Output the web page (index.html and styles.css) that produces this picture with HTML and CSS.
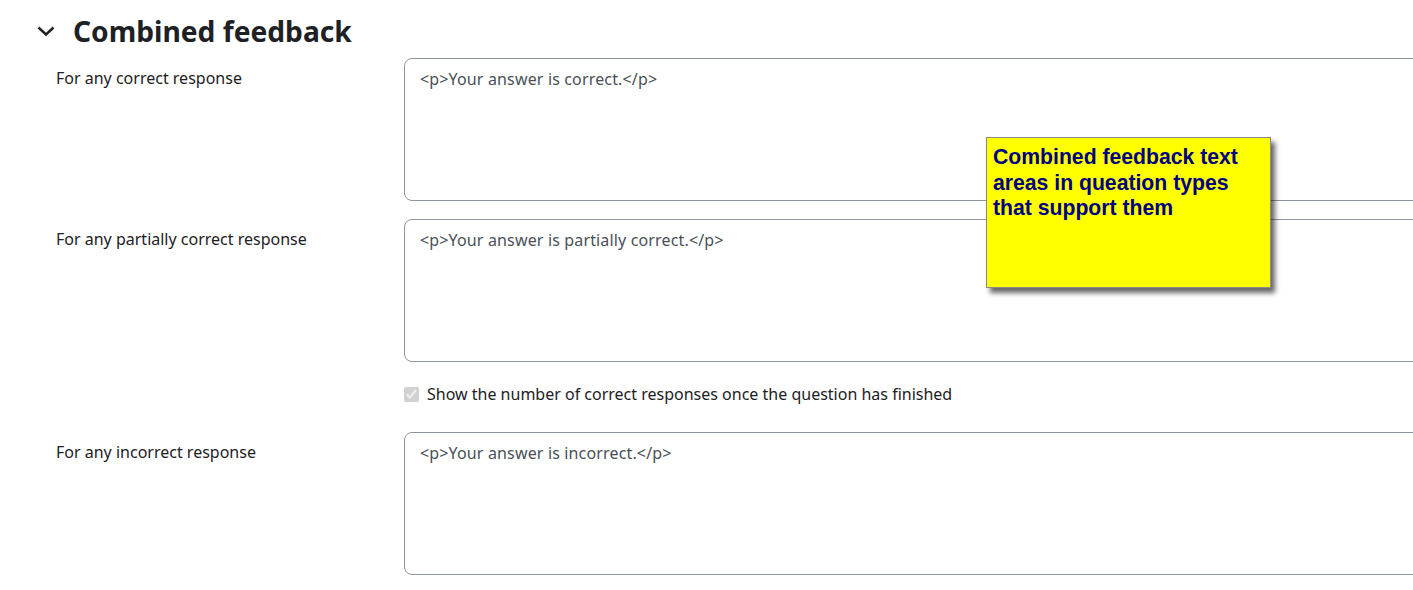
FILE: index.html
```html
<!DOCTYPE html>
<html lang="en">
<head>
    <meta charset="UTF-8">
    <title>Combined feedback</title>
    <link rel="stylesheet" href="styles.css">
</head>
<body>
    <div class="section">
        <div class="section-head">
            <svg class="chevron" width="18" height="12" viewBox="0 0 18 12">
                <path d="M1.5 2.5 L9 9.5 L16.5 2.5" fill="none" stroke="#1d2125" stroke-width="2.4"/>
            </svg>
            <h3>Combined feedback</h3>
        </div>

        <div class="row">
            <label for="fb-correct">For any correct response</label>
            <textarea id="fb-correct">&lt;p&gt;Your answer is correct.&lt;/p&gt;</textarea>
        </div>

        <div class="row">
            <label for="fb-partial">For any partially correct response</label>
            <textarea id="fb-partial">&lt;p&gt;Your answer is partially correct.&lt;/p&gt;</textarea>
        </div>

        <div class="check-row">
            <label class="check"><input type="checkbox" checked disabled> Show the number of correct responses once the question has finished</label>
        </div>

        <div class="row">
            <label for="fb-incorrect">For any incorrect response</label>
            <textarea id="fb-incorrect">&lt;p&gt;Your answer is incorrect.&lt;/p&gt;</textarea>
        </div>
    </div>

    <div class="note">Combined feedback text areas in queation types that support them</div>
</body>
</html>
```

FILE: styles.css
```css
html, body {
    overflow: hidden;
}

body {
    margin: 0;
    font-family: "Noto Sans", "Open Sans", sans-serif;
    font-size: 16px;
    color: #1d2125;
    background: #fff;
    position: relative;
    height: 590px;
}

.section {
    padding: 10px 0 0 37px;
}

.section-head {
    display: flex;
    align-items: center;
    gap: 18px;
    height: 42px;
}

.chevron {
    display: block;
}

h3 {
    margin: 0;
    font-size: 28.2px;
    font-weight: 700;
}

.row {
    display: grid;
    grid-template-columns: 348px 1100px;
    margin-left: 19px;
    margin-top: 6px;
}

.row + .row {
    margin-top: 18px;
}

.row > label {
    padding-top: 9px;
    line-height: 22px;
}

textarea {
    display: block;
    box-sizing: border-box;
    margin: 0;
    height: 143px;
    width: 1100px;
    padding: 9px 15px;
    border: 1px solid #8f959e;
    border-radius: 8px;
    font-family: inherit;
    font-size: 16px;
    letter-spacing: 0.15px;
    line-height: 22px;
    color: #495057;
    resize: none;
}

.check-row {
    margin: 21px 0 27px 367px;
}

.check {
    display: flex;
    align-items: center;
    gap: 8px;
    height: 22px;
    line-height: 22px;
}

.check input {
    margin: 0;
    width: 15px;
    height: 15px;
}

.note {
    position: absolute;
    left: 986px;
    top: 137px;
    width: 285px;
    height: 151px;
    box-sizing: border-box;
    padding: 6px 20px 6px 6px;
    background: #ffff00;
    border: 1px solid #8a8a8a;
    box-shadow: 4px 5px 5px rgba(0, 0, 0, 0.6);
    font-family: "Liberation Sans", Arial, sans-serif;
    font-weight: 700;
    font-size: 21.2px;
    line-height: 25.5px;
    color: #000080;
}
```
